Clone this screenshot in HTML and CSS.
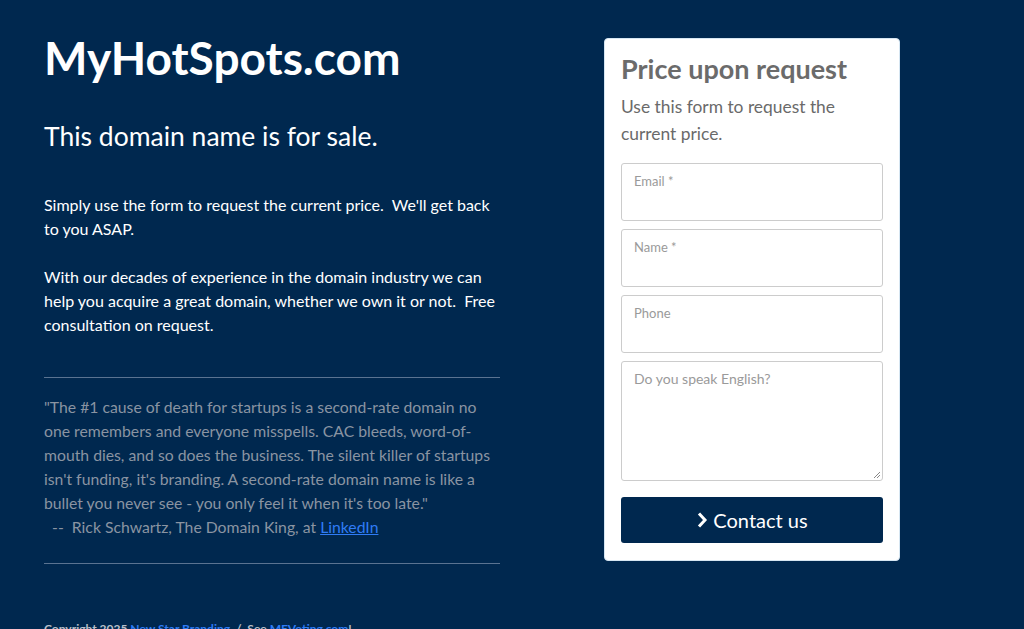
FILE: index.html
```html
<!DOCTYPE html>
<html>
<head>
<meta charset="utf-8">
<link rel="stylesheet" href="styles.css">
</head>
<body>
<div class="page">
  <div class="main">
    <div class="left">
      <h1 class="title">MyHotSpots.com</h1>
      <h2 class="sub">This domain name is for sale.</h2>
      <p class="text">Simply use the form to request the current price.&nbsp; We'll get back to you ASAP.</p>
      <p class="text">With our decades of experience in the domain industry we can help you acquire a great domain, whether we own it or not.&nbsp; Free consultation on request.</p>
      <hr class="rule">
      <p class="quote">"The #1 cause of death for startups is a second-rate domain no one remembers and everyone misspells. CAC bleeds, word-of-mouth dies, and so does the business. The silent killer of startups isn't funding, it's branding. A second-rate domain name is like a bullet you never see - you only feel it when it's too late."<br>&nbsp;&nbsp;--&nbsp; Rick Schwartz, The Domain King, at <a href="#">LinkedIn</a></p>
      <hr class="rule">
      <p class="footer">Copyright 2025 <a href="#">New Star Branding</a> &nbsp;/&nbsp; See <a href="#">MEVoting.com</a>!</p>
    </div>
    <div class="card">
      <h3 class="card-title">Price upon request</h3>
      <p class="card-text">Use this form to request the current price.</p>
      <form class="form">
        <label class="field"><span class="label">Email *</span></label>
        <label class="field"><span class="label">Name *</span></label>
        <label class="field"><span class="label">Phone</span></label>
        <label class="field area"><span class="label">Do you speak English?</span>
          <svg class="grip" width="8" height="8" viewBox="0 0 8 8"><path d="M7 1L1 7M7 4L4 7" stroke="#888" stroke-width="1"/></svg>
        </label>
        <button type="button" class="btn"><svg width="12" height="18" viewBox="0 0 12 18"><path d="M3 2.5L9 9L3 15.5" fill="none" stroke="#fff" stroke-width="3"/></svg>Contact us</button>
      </form>
    </div>
  </div>
</div>
</body>
</html>
```
FILE: styles.css
```css
html, body {
  margin: 0;
  padding: 0;
  background: #00284f;
  font-family: Lato, "Open Sans", sans-serif;
  overflow: hidden;
}
.page {
  padding: 38px 0 0 44px;
}
.main {
  display: grid;
  grid-template-columns: 456px 296px;
  column-gap: 104px;
  align-items: start;
}
.left {
  color: #fff;
}
.title {
  margin: -2px 0 0;
  font-size: 46px;
  font-weight: 700;
  line-height: 44px;
}
.sub {
  margin: 38px 0 0;
  font-size: 26.5px;
  font-weight: 400;
  line-height: 36px;
}
.text {
  margin: 39px 0 0;
  font-size: 16px;
  line-height: 24px;
}
.text + .text {
  margin-top: 24px;
}
.rule {
  border: 0;
  border-top: 1px solid #5a7391;
  margin: 40px 0 0;
  height: 0;
}
.quote {
  margin: 17px 0 0;
  font-size: 15.75px;
  line-height: 24px;
  color: #8a94a2;
}
.quote a {
  color: #2f7cf6;
}
.quote + .rule {
  margin-top: 24px;
}
.footer {
  margin: 57px 0 0;
  font-size: 12px;
  font-weight: 700;
  color: #b7bfc9;
}
.footer a {
  color: #2f7cf6;
  text-decoration: none;
}
.card {
  background: #fff;
  border: 1px solid #d6e6f2;
  border-radius: 4px;
  padding: 15px 16px 17px;
}
.card-title {
  margin: -2px 0 0;
  font-size: 27px;
  font-weight: 700;
  color: #6b6b6b;
  line-height: 34px;
}
.card-text {
  margin: 7px 0 0;
  font-size: 17.4px;
  line-height: 27px;
  color: #6a6a6a;
}
.form {
  display: flex;
  flex-direction: column;
  gap: 8px;
  margin-top: 16px;
}
.field {
  position: relative;
  display: block;
  box-sizing: border-box;
  height: 58px;
  border: 1px solid #ccc;
  border-radius: 3px;
  padding: 9px 12px 0;
}
.field.area {
  height: 120px;
}
.label {
  display: block;
  font-size: 13px;
  color: #9a9a9a;
  line-height: 16px;
}
.field.area .label {
  font-size: 14px;
}
.grip {
  position: absolute;
  right: 1px;
  bottom: 1px;
}
.btn {
  margin-top: 8px;
  height: 46px;
  border: 0;
  border-radius: 3px;
  background: #00284f;
  color: #fff;
  font-family: Lato, sans-serif;
  font-size: 20px;
  display: flex;
  align-items: center;
  justify-content: center;
  gap: 5px;
  padding: 0;
}
```
